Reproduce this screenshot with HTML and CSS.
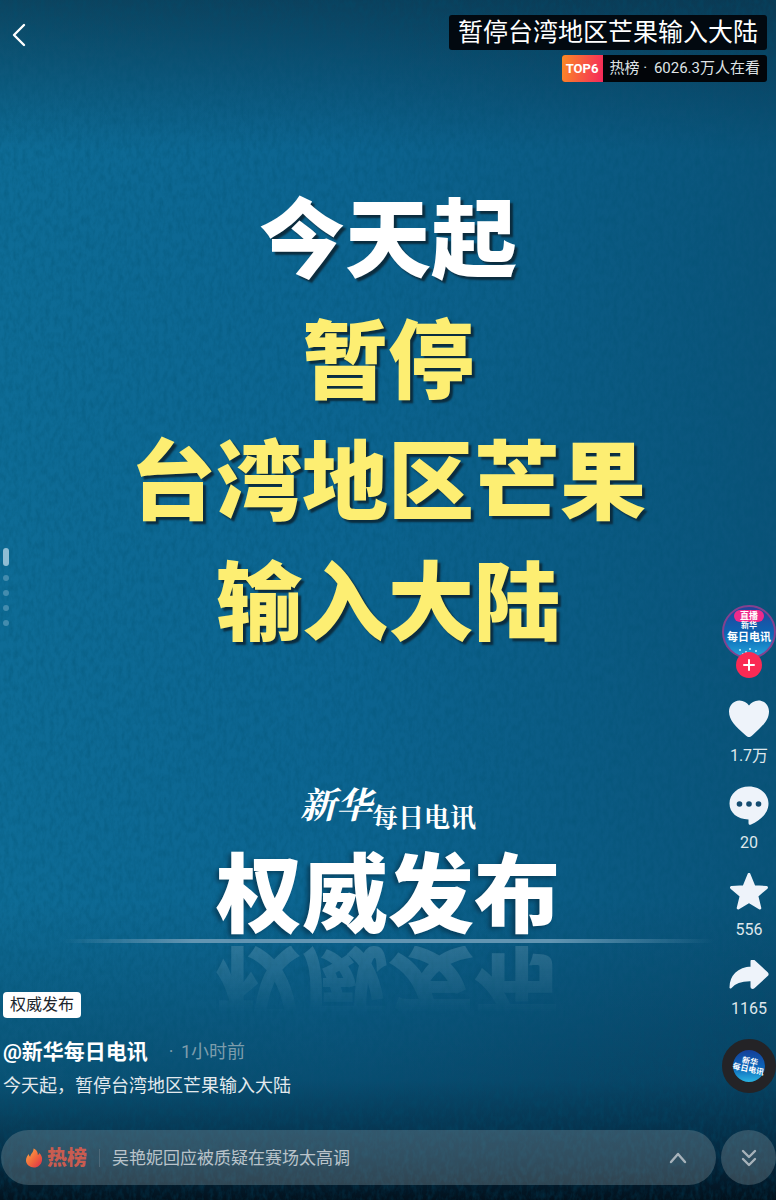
FILE: index.html
```html
<!DOCTYPE html>
<html lang="zh-CN">
<head>
<meta charset="utf-8">
<meta name="viewport" content="width=device-width, initial-scale=1">
<title>新华每日电讯</title>
<link rel="stylesheet" href="styles.css">
</head>
<body>
<main class="screen">
  <svg class="texture" aria-hidden="true">
    <filter id="paper" x="0" y="0" width="100%" height="100%">
      <feTurbulence type="fractalNoise" baseFrequency="0.22 0.12" numOctaves="3" seed="4"/>
      <feColorMatrix values="0 0 0 0 0  0 0 0 0 0.08  0 0 0 0 0.16  1.6 0 0 0 -0.6"/>
    </filter>
    <rect width="100%" height="100%" filter="url(#paper)"/>
  </svg>

  <article class="poster">
    <h1 class="headline">
      <span class="headline-first">今天起</span>
      <span>暂停</span>
      <span>台湾地区芒果</span>
      <span>输入大陆</span>
    </h1>
    <p class="masthead"><span class="masthead-brush">新华</span><span class="masthead-name">每日电讯</span></p>
    <p class="stamp">权威发布</p>
    <div class="horizon"></div>
  </article>

  <div class="overlay">
    <header class="topbar">
      <button class="back" type="button" aria-label="返回">
        <svg width="16" height="24" viewBox="0 0 16 24" fill="none" stroke="#fff" stroke-width="2.4" stroke-linecap="round" stroke-linejoin="round"><path d="M12 2 2 12l10 10"/></svg>
      </button>
      <div class="topic">
        <a class="topic-title" href="#topic">暂停台湾地区芒果输入大陆</a>
        <a class="topic-rank" href="#rank"><span class="rank-badge">TOP6</span><span class="rank-text">热榜 <span class="dot">·</span> 6026.3万人在看</span></a>
      </div>
    </header>

    <div class="pages" aria-hidden="true"><i class="page page-current"></i><i class="page"></i><i class="page"></i><i class="page"></i><i class="page"></i></div>

    <section class="info">
      <span class="tag">权威发布</span>
      <p class="byline"><a class="author" href="#author">@新华每日电讯</a><span class="time"><span class="dot">·</span> 1小时前</span></p>
      <p class="caption">今天起，暂停台湾地区芒果输入大陆</p>
    </section>

    <aside class="rail">
      <div class="profile">
        <a class="avatar" href="#live"><span class="live">直播</span><span class="avatar-top">新华</span><span class="avatar-name">每日电讯</span>
          <svg class="sparkle" width="30" height="8" viewBox="0 0 30 8" fill="#c6f1ff"><circle cx="6" cy="2" r="1"/><circle cx="12" cy="4" r="1"/><circle cx="16" cy="1" r="1"/><circle cx="22" cy="3" r="1"/><circle cx="9" cy="6" r="1"/><circle cx="19" cy="6" r="1"/></svg>
        </a>
        <button class="follow" type="button" aria-label="关注">
          <svg width="12" height="12" viewBox="0 0 12 12" stroke="#fff" stroke-width="2" stroke-linecap="round"><path d="M6 1v10M1 6h10"/></svg>
        </button>
      </div>
      <button class="action" type="button">
        <svg width="40" height="40" viewBox="0 0 40 40" fill="#eef3fa"><path d="M20 38c-1.200 0-2.400-.8-4-2.300C7 27.500 0 21.500 0 12.500 0 6.500 4.500 1.500 10.500 1.500c4 0 7.500 2.200 9.500 5 2-2.800 5.500-5 9.500-5C35.500 1.500 40 6.500 40 12.500c0 9-7 15-16 23.200-1.600 1.500-2.800 2.300-4 2.300z"/></svg>
        <span>1.7万</span>
      </button>
      <button class="action" type="button">
        <svg width="40" height="40" viewBox="0 0 40 40"><path fill="#eef3fa" d="M20 .5C9 .5.5 8 .5 17.500S8.500 33 19.500 33.500V37c0 1.600 1.200 2.300 2.600 1.600C31 34.500 39.500 27.500 39.500 17.500 39.500 8 31 .5 20 .5z"/><g fill="#154c70"><circle cx="10.500" cy="18" r="2.800"/><circle cx="20" cy="18" r="2.800"/><circle cx="29.500" cy="18" r="2.800"/></g></svg>
        <span>20</span>
      </button>
      <button class="action" type="button">
        <svg width="40" height="40" viewBox="0 0 40 40" fill="#eef3fa" stroke="#eef3fa" stroke-width="3" stroke-linejoin="round"><path d="m20 1.500 5 12.200 12.500.8-9.700 8.300 3 12.200L20 28.500 9.200 35l3-12.200L2.500 14.500l12.500-.8z"/></svg>
        <span>556</span>
      </button>
      <button class="action" type="button">
        <svg width="40" height="32" viewBox="0 1 40 32" fill="#eef3fa" stroke="#eef3fa" stroke-width="2" stroke-linejoin="round"><path d="M22.500 2.500c0-1.500 1.200-1.700 2.200-.8L38 14c.8.800.8 1.500 0 2.300L24.700 28.500c-1 .9-2.200.5-2.200-.8v-6.400C13.500 21 6.500 22.500 1.500 28.500 1.500 17.500 9 9 22.500 8.500z"/></svg>
        <span>1165</span>
      </button>
      <a class="disc" href="#sound"><span class="disc-label"><span>新华</span><span>每日电讯</span></span></a>
    </aside>

    <footer class="bottombar">
      <a class="hot" href="#hot">
        <svg width="18" height="20" viewBox="0 0 18 20"><defs><linearGradient id="flame" x1="0" y1="0" x2="1" y2="1"><stop offset="0" stop-color="#ffb047"/><stop offset=".55" stop-color="#f0653c"/><stop offset="1" stop-color="#d92b4b"/></linearGradient></defs><path fill="url(#flame)" d="M8.500.5c3.500 1.500 4.500 4 4.300 6.500.8-.4 1.200-1.200 1.400-2C16.500 7 17.500 9.500 17 12.500 16.300 16.800 13 19.500 9 19.500S1 16.500 1 12.500C1 9.500 2.500 7.500 3.800 6c.2 1.500.6 2.200 1.400 2.800C5.500 5.500 8.800 4.500 8.500.5z"/></svg>
        <strong class="hot-name">热榜</strong>
        <span class="hot-text">吴艳妮回应被质疑在赛场太高调</span>
        <svg class="hot-arrow" width="18" height="12" viewBox="0 0 18 12" fill="none" stroke="#a7b2ba" stroke-width="2.400" stroke-linecap="round" stroke-linejoin="round"><path d="m2 10 7-8 7 8"/></svg>
      </a>
      <button class="next" type="button" aria-label="下一个">
        <svg width="16" height="18" viewBox="0 0 16 18" fill="none" stroke="#a7b2ba" stroke-width="2.400" stroke-linecap="round" stroke-linejoin="round"><path d="m2 2 6 6 6-6M2 10l6 6 6-6"/></svg>
      </button>
    </footer>
  </div>
</main>
</body>
</html>
```
FILE: styles.css
```css
* { box-sizing: border-box; }

body {
  margin: 0;
  background: #03182a;
  color: #fff;
  font-family: Roboto, "Noto Sans CJK SC", "Noto Sans", sans-serif;
}

h1, p { margin: 0; }
a { color: inherit; text-decoration: none; }
button { padding: 0; border: 0; background: none; color: inherit; font: inherit; cursor: pointer; }
svg { display: block; }

.screen {
  display: grid;
  min-height: 100vh;
  overflow: hidden;
  background:
    linear-gradient(180deg, rgba(10, 36, 52, .55) 0, rgba(10, 46, 66, 0) 150px),
    linear-gradient(0deg, rgba(2, 12, 22, .94) 0, rgba(2, 20, 36, .72) 40px, rgba(2, 24, 42, .3) 120px, rgba(2, 24, 42, 0) 300px),
    linear-gradient(90deg, #0e6c96 0, #0c6490 45%, #0a5379 100%);
}

.texture, .poster, .overlay { grid-area: 1 / 1; }
.texture { width: 100%; height: 100%; opacity: .4; }

/* Poster */
.poster {
  z-index: 1;
  display: flex;
  flex-direction: column;
  align-items: center;
  padding-top: 173px;
  font-family: "Noto Sans CJK SC", sans-serif;
}
.headline {
  display: flex;
  flex-direction: column;
  align-items: center;
  color: #fdee72;
  font-size: 86px;
  font-weight: 900;
  line-height: 121px;
  text-shadow: 3px 3px 2px #0b2c3e;
}
.headline-first { color: #fff; }
.masthead {
  display: flex;
  align-items: flex-end;
  margin-top: 120px;
  font-weight: 700;
}
.masthead-brush {
  font-family: "Noto Serif CJK SC", "Noto Sans CJK SC", serif;
  font-size: 36px;
  font-style: italic;
  line-height: 52px;
}
.masthead-name {
  font-family: "Noto Serif CJK SC", "Noto Sans CJK SC", serif;
  font-size: 26px;
  line-height: 26px;
}
.stamp {
  margin-top: 15px;
  font-size: 86px;
  font-weight: 900;
  line-height: 90px;
  text-shadow: -3px 2px 4px rgba(5, 40, 62, .6);
  -webkit-box-reflect: below 12px linear-gradient(transparent 25%, rgba(255, 255, 255, .14));
}
.horizon {
  width: 84%;
  height: 4px;
  margin-top: 5px;
  background: linear-gradient(90deg, transparent, #6295b2 20%, #6295b2 75%, transparent);
}

/* Controls over the poster */
.overlay {
  z-index: 2;
  display: grid;
  grid-template-columns: 1fr 54px;
  grid-template-rows: auto 1fr auto;
}
.topbar {
  grid-area: 1 / 1 / 2 / 3;
  display: flex;
  align-items: flex-start;
  justify-content: space-between;
  padding: 15px 9px 0;
}
.back { padding: 8px 3px; }
.topic { display: flex; flex-direction: column; align-items: flex-end; gap: 5px; }
.topic-title {
  padding: 0 9px;
  border-radius: 3px;
  background: #020910;
  font-size: 25px;
  line-height: 35px;
}
.topic-rank {
  display: flex;
  overflow: hidden;
  border-radius: 3px;
  background: #020509;
  color: #dfe3e6;
  font-size: 15px;
  line-height: 27px;
}
.rank-badge {
  width: 41px;
  background: linear-gradient(100deg, #fb8a25, #f5285c);
  color: #fff;
  font-size: 13px;
  font-weight: 700;
  text-align: center;
}
.rank-text { padding: 0 7px; }
.dot { margin-right: 3px; }

.pages {
  grid-area: 1 / 1 / 4 / 2;
  align-self: center;
  justify-self: start;
  display: flex;
  flex-direction: column;
  gap: 9px;
  margin: 0 0 26px 3px;
}
.page { width: 6px; height: 6px; border-radius: 3px; background: #438cae; }
.page-current { height: 18px; background: #8fbdd4; }

.info { grid-area: 2 / 1; align-self: end; padding: 0 3px 28px; }
.tag {
  display: block;
  width: fit-content;
  padding: 0 7px;
  border-radius: 4px;
  background: #fff;
  color: #20262c;
  font-size: 16px;
  line-height: 26px;
}
.byline { display: flex; align-items: center; gap: 21px; margin-top: 16px; line-height: 36px; }
.author { font-size: 21px; font-weight: 700; }
.time { color: #7d9dac; font-size: 18px; }
.caption { color: #e3e9ed; font-size: 18px; line-height: 32px; }

.rail {
  grid-area: 2 / 2;
  align-self: end;
  display: flex;
  flex-direction: column;
  align-items: center;
  gap: 20px;
  padding-bottom: 37px;
}
.profile { display: flex; flex-direction: column; align-items: center; height: 74px; }
.avatar {
  display: flex;
  flex: none;
  flex-direction: column;
  align-items: center;
  width: 54px;
  height: 54px;
  padding-top: 3px;
  overflow: hidden;
  border: 2px solid #84418f;
  border-radius: 50%;
  background: linear-gradient(#24439a, #0b67b4 55%, #25a5dc);
  font-weight: 700;
  white-space: nowrap;
}
.live {
  padding: 0 6px;
  border-radius: 6px;
  background: #ef2a8b;
  font-size: 9px;
  line-height: 12px;
}
.avatar-top { font-size: 8px; line-height: 8px; }
.avatar-name { font-size: 11px; line-height: 15px; }
.sparkle { margin-top: 3px; }
.follow {
  z-index: 1;
  display: grid;
  flex: none;
  place-items: center;
  width: 26px;
  height: 26px;
  margin-top: -7px;
  border-radius: 50%;
  background: #fa2a54;
}
.action {
  display: flex;
  flex-direction: column;
  align-items: center;
  gap: 7px;
  color: #dfe7ec;
  font-size: 16px;
  line-height: 20px;
}
.disc {
  display: grid;
  place-items: center;
  width: 54px;
  height: 54px;
  border: 11px solid #242326;
  border-radius: 50%;
  background: linear-gradient(#153f99, #0c66ba 55%, #2ab2e0);
}
.disc-label {
  display: flex;
  flex-direction: column;
  align-items: center;
  font-size: 8px;
  font-weight: 700;
  line-height: 8px;
  white-space: nowrap;
  transform: rotate(12deg);
}

.bottombar {
  grid-area: 3 / 1 / 4 / 3;
  display: flex;
  gap: 5px;
  padding: 0 0 15px 1px;
}
.hot {
  display: flex;
  flex: 1;
  align-items: center;
  height: 55px;
  padding: 0 29px 0 24px;
  border-radius: 28px;
  background: rgba(142, 158, 166, .32);
}
.hot-name { margin-left: 4px; color: #c95c50; font-size: 20px; font-weight: 900; line-height: 24px; }
.hot-text {
  margin-left: 12px;
  padding-left: 12px;
  border-left: 1px solid #4d6878;
  color: #b9c3ca;
  font-size: 17px;
  line-height: 18px;
}
.hot-arrow { margin-left: auto; }
.next {
  display: grid;
  place-items: center;
  width: 55px;
  height: 55px;
  border-radius: 50%;
  background: rgba(142, 158, 166, .32);
}
```
